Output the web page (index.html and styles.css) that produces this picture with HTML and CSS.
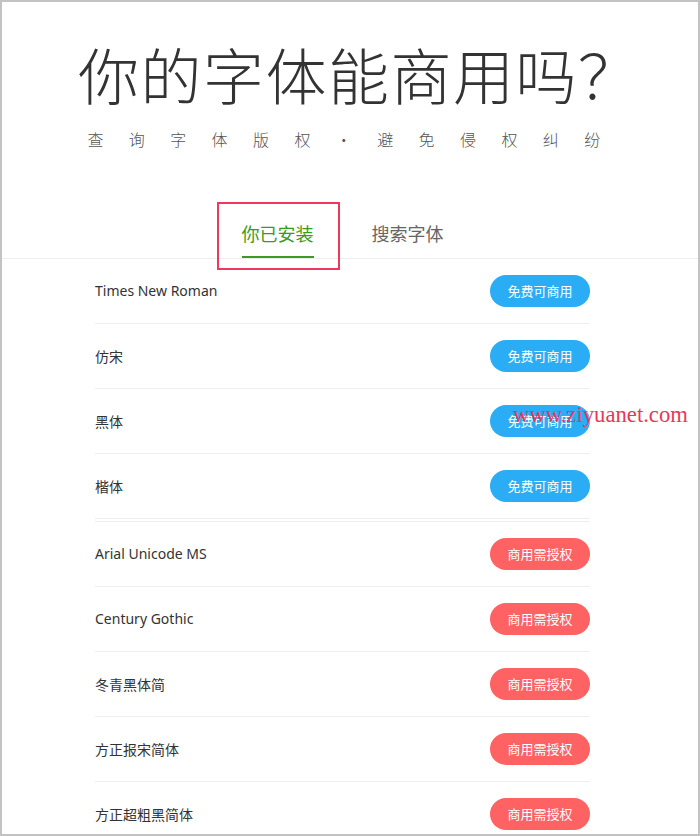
FILE: index.html
```html
<!DOCTYPE html>
<html lang="zh-CN">
<head>
    <meta charset="UTF-8">
    <meta name="viewport" content="width=device-width, initial-scale=1.0">
    <title>你的字体能商用吗？</title>
    <link rel="stylesheet" href="styles.css">
</head>
<body>
    <div class="page">
        <header class="hero">
            <h1 class="hero-title">你的字体能商用吗？</h1>
            <p class="hero-sub">查询字体版权·避免侵权纠纷</p>
        </header>

        <nav class="tab-bar">
            <div class="tab-inner">
                <a class="tab active">你已安装<span class="mark-box"></span></a>
                <a class="tab">搜索字体</a>
            </div>
        </nav>

        <main class="font-list">
            <ul class="group">
                <li class="row"><span class="font-name">Times New Roman</span><span class="pill free">免费可商用</span></li>
                <li class="row"><span class="font-name">仿宋</span><span class="pill free">免费可商用</span></li>
                <li class="row"><span class="font-name">黑体</span><span class="pill free">免费可商用</span></li>
                <li class="row"><span class="font-name">楷体</span><span class="pill free">免费可商用</span></li>
            </ul>
            <ul class="group paid">
                <li class="row"><span class="font-name">Arial Unicode MS</span><span class="pill paid-pill">商用需授权</span></li>
                <li class="row"><span class="font-name">Century Gothic</span><span class="pill paid-pill">商用需授权</span></li>
                <li class="row"><span class="font-name">冬青黑体简</span><span class="pill paid-pill">商用需授权</span></li>
                <li class="row"><span class="font-name">方正报宋简体</span><span class="pill paid-pill">商用需授权</span></li>
                <li class="row"><span class="font-name">方正超粗黑简体</span><span class="pill paid-pill">商用需授权</span></li>
            </ul>
        </main>

        <div class="watermark">www.ziyuanet.com</div>
    </div>
</body>
</html>
```

FILE: styles.css
```css
* {
    box-sizing: border-box;
}

html, body {
    margin: 0;
    padding: 0;
    background-color: #ffffff;
}

body {
    font-family: "Noto Sans", "Noto Sans CJK SC", sans-serif;
    color: #333333;
}

.page {
    position: relative;
    width: 700px;
    height: 836px;
    border: 2px solid #c3c3c3;
    overflow: hidden;
}

.hero {
    text-align: center;
    padding-top: 42px;
}

.hero-title {
    margin: 0;
    padding-left: 76px;
    text-align: left;
    font-family: "Noto Sans CJK SC", sans-serif;
    font-size: 61px;
    font-weight: 300;
    line-height: 60px;
    letter-spacing: 1.5px;
    color: #333333;
    white-space: nowrap;
}

.hero-sub {
    margin: 27px 0 0;
    font-family: "Noto Sans CJK SC", sans-serif;
    font-size: 16px;
    font-weight: 300;
    line-height: 16px;
    letter-spacing: 25.4px;
    color: #555555;
    padding-left: 13px;
}

.tab-bar {
    margin-top: 77px;
    border-bottom: 1px solid #eeeeee;
}

.tab-inner {
    width: 495px;
    margin-left: 93px;
    display: flex;
    justify-content: center;
    gap: 58px;
}

.tab {
    position: relative;
    font-family: "Noto Sans CJK SC", sans-serif;
    font-size: 18px;
    line-height: 18px;
    color: #666666;
    padding-bottom: 14px;
}

.tab.active {
    color: #3b9b20;
    border-bottom: 2px solid #3b9b20;
}

.mark-box {
    position: absolute;
    left: -25px;
    top: -22px;
    width: 123px;
    height: 68px;
    border: 2px solid #f0385c;
}

.font-list {
    width: 495px;
    margin-left: 93px;
}

.group {
    list-style: none;
    margin: 0;
    padding: 0;
}

.group.paid {
    margin-top: 2px;
    border-top: 1px solid #eeeeee;
}

.row {
    display: flex;
    align-items: center;
    justify-content: space-between;
    height: 65px;
    padding-bottom: 1px;
    border-bottom: 1px solid #eeeeee;
    font-size: 14px;
    color: #333333;
}

.pill {
    width: 100px;
    height: 32px;
    border-radius: 16px;
    color: #ffffff;
    font-family: "Noto Sans CJK SC", sans-serif;
    font-size: 13px;
    display: flex;
    align-items: center;
    justify-content: center;
}

.pill.free {
    background-color: #2aadf5;
}

.pill.paid-pill {
    background-color: #ff6262;
}

.watermark {
    position: absolute;
    left: 511px;
    top: 400px;
    font-family: "Liberation Serif", serif;
    font-size: 22.7px;
    color: #e8385a;
}
```
